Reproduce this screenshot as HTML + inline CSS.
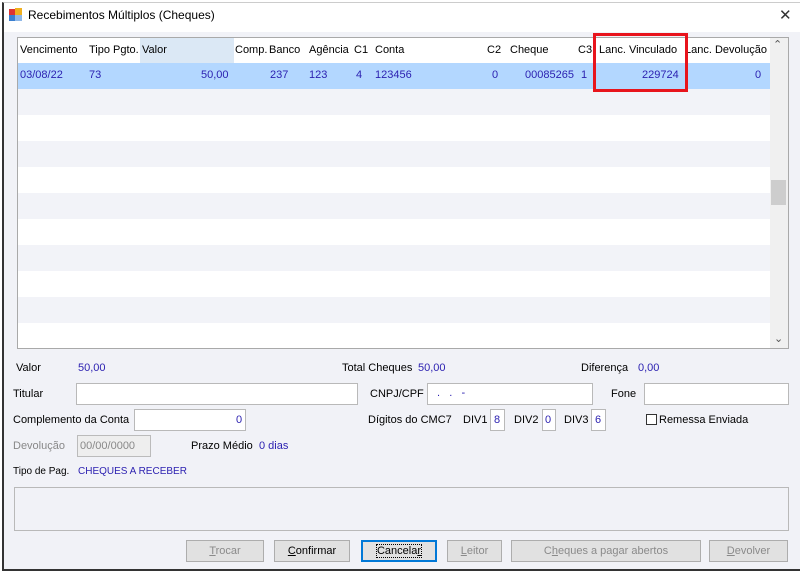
<!DOCTYPE html>
<html><head><meta charset="utf-8"><style>
*{box-sizing:border-box;margin:0;padding:0}
body{width:800px;height:573px;background:#fff;font-family:"Liberation Sans",sans-serif;font-size:11px;color:#000;position:relative;overflow:hidden}
.a{position:absolute;white-space:nowrap}
.win{position:absolute;left:2px;top:2px;width:798px;height:569px;border-left:2px solid #333;border-bottom:2px solid #333;border-top:1px solid #ccc;background:#f1f2f7}
.title{position:absolute;left:0;top:0;width:100%;height:29px;background:#fff}
.grid{position:absolute;left:17px;top:37px;width:772px;height:312px;border:1px solid #a9a9a9;background:#fff;overflow:hidden}
.row{position:absolute;left:0;width:752px;height:26px}
.inp{position:absolute;background:#fff;border:1px solid #b9b9b9}
.blue{color:#2a1fb0}
.btn{position:absolute;top:540px;height:22px;border:1px solid #adadad;background:#e1e1e1;text-align:center;line-height:20px;color:#8a8a8a}
.btn.en{color:#000}
</style></head><body>
<div class="win">
<div class="title"></div>
</div>
<div class="a" style="left:9px;top:9px;width:6px;height:6px;background:#d33"></div>
<div class="a" style="left:15px;top:8px;width:7px;height:7px;background:#f0b020"></div>
<div class="a" style="left:9px;top:15px;width:6px;height:6px;background:#3a7fd0"></div>
<div class="a" style="left:15px;top:15px;width:7px;height:6px;background:#8fb8e8"></div>
<div class="a" style="left:28px;top:8px;font-size:12px">Recebimentos Múltiplos (Cheques)</div>
<div class="a" style="left:779px;top:6px;font-size:15px;color:#333">✕</div>

<div class="grid">
<div class="a" style="left:122px;top:0;width:94px;height:25px;background:#dbe8f5"></div>
<div class="row" style="top:25px;background:#b3d7ff"></div>
<div class="row" style="top:51px;background:#f2f3f8"></div>
<div class="row" style="top:103px;background:#f2f3f8"></div>
<div class="row" style="top:155px;background:#f2f3f8"></div>
<div class="row" style="top:207px;background:#f2f3f8"></div>
<div class="row" style="top:259px;background:#f2f3f8"></div>
<div class="a" style="left:752px;top:0;width:18px;height:312px;background:#f0f0f0"></div>
<div class="a" style="left:753px;top:142px;width:15px;height:25px;background:#cdcdcd"></div>
<div class="a" style="left:755px;top:0px;font-size:11px;color:#555">⌃</div>
<div class="a" style="left:756px;top:294px;font-size:11px;color:#555">⌄</div>
</div>
<!-- header -->
<div class="a" style="left:20px;top:44px">Vencimento</div>
<div class="a" style="left:89px;top:44px">Tipo Pgto.</div>
<div class="a" style="left:142px;top:44px">Valor</div>
<div class="a" style="left:235px;top:44px">Comp.</div>
<div class="a" style="left:269px;top:44px">Banco</div>
<div class="a" style="left:309px;top:44px">Agência</div>
<div class="a" style="left:354px;top:44px">C1</div>
<div class="a" style="left:375px;top:44px">Conta</div>
<div class="a" style="left:487px;top:44px">C2</div>
<div class="a" style="left:510px;top:44px">Cheque</div>
<div class="a" style="left:578px;top:44px">C3</div>
<div class="a" style="left:599px;top:44px">Lanc. Vinculado</div>
<div class="a" style="left:685px;top:44px">Lanc. Devolução</div>
<!-- data -->
<div class="a blue" style="left:20px;top:69px">03/08/22</div>
<div class="a blue" style="left:89px;top:69px">73</div>
<div class="a blue" style="left:201px;top:69px">50,00</div>
<div class="a blue" style="left:270px;top:69px">237</div>
<div class="a blue" style="left:309px;top:69px">123</div>
<div class="a blue" style="left:356px;top:69px">4</div>
<div class="a blue" style="left:375px;top:69px">123456</div>
<div class="a blue" style="left:492px;top:69px">0</div>
<div class="a blue" style="left:525px;top:69px">00085265</div>
<div class="a blue" style="left:581px;top:69px">1</div>
<div class="a blue" style="left:642px;top:69px">229724</div>
<div class="a blue" style="left:755px;top:69px">0</div>
<div class="a" style="left:593px;top:33px;width:95px;height:59px;border:3px solid #e8141c"></div>

<div class="a" style="left:16px;top:362px">Valor</div>
<div class="a blue" style="left:78px;top:362px">50,00</div>
<div class="a" style="left:342px;top:362px">Total Cheques</div>
<div class="a blue" style="left:418px;top:362px">50,00</div>
<div class="a" style="left:581px;top:362px">Diferença</div>
<div class="a blue" style="left:638px;top:362px">0,00</div>

<div class="a" style="left:13px;top:388px">Titular</div>
<div class="inp" style="left:76px;top:383px;width:282px;height:22px"></div>
<div class="a" style="left:370px;top:388px">CNPJ/CPF</div>
<div class="inp" style="left:427px;top:383px;width:166px;height:22px"></div>
<div class="a blue" style="left:437px;top:387px">.&nbsp;&nbsp;&nbsp;.&nbsp;&nbsp;&nbsp;-</div>
<div class="a" style="left:611px;top:388px">Fone</div>
<div class="inp" style="left:644px;top:383px;width:145px;height:22px"></div>

<div class="a" style="left:13px;top:414px">Complemento da Conta</div>
<div class="inp" style="left:134px;top:409px;width:112px;height:22px"></div>
<div class="a blue" style="left:236px;top:414px">0</div>
<div class="a" style="left:368px;top:414px">Dígitos do CMC7</div>
<div class="a" style="left:463px;top:414px">DIV1</div>
<div class="inp" style="left:490px;top:409px;width:15px;height:22px"></div>
<div class="a blue" style="left:494px;top:414px">8</div>
<div class="a" style="left:514px;top:414px">DIV2</div>
<div class="inp" style="left:542px;top:409px;width:14px;height:22px"></div>
<div class="a blue" style="left:545px;top:414px">0</div>
<div class="a" style="left:564px;top:414px">DIV3</div>
<div class="inp" style="left:591px;top:409px;width:15px;height:22px"></div>
<div class="a blue" style="left:595px;top:414px">6</div>
<div class="a" style="left:646px;top:414px;width:11px;height:11px;border:1px solid #333;background:#fff"></div>
<div class="a" style="left:659px;top:414px">Remessa Enviada</div>

<div class="a" style="left:13px;top:440px;color:#888">Devolução</div>
<div class="inp" style="left:77px;top:435px;width:74px;height:22px;background:#eee;border-color:#bbb"></div>
<div class="a" style="left:80px;top:440px;color:#888">00/00/0000</div>
<div class="a" style="left:191px;top:440px">Prazo Médio</div>
<div class="a blue" style="left:259px;top:440px">0 dias</div>

<div class="a" style="left:13px;top:466px;font-size:10px">Tipo de Pag.</div>
<div class="a blue" style="left:78px;top:466px;font-size:10px">CHEQUES A RECEBER</div>
<div class="a" style="left:14px;top:487px;width:775px;height:44px;border:1px solid #b9b9b9;background:#f1f2f7"></div>

<div class="btn" style="left:186px;width:78px"><u>T</u>rocar</div>
<div class="btn en" style="left:274px;width:76px"><u>C</u>onfirmar</div>
<div class="btn en" style="left:361px;width:76px;border:1px solid #0078d7;box-shadow:inset 0 0 0 1px #0078d7"><span style="outline:1px dotted #000">Cancela<u>r</u></span></div>
<div class="btn" style="left:447px;width:55px"><u>L</u>eitor</div>
<div class="btn" style="left:511px;width:190px">C<u>h</u>eques a pagar abertos</div>
<div class="btn" style="left:709px;width:79px"><u>D</u>evolver</div>
</body></html>
